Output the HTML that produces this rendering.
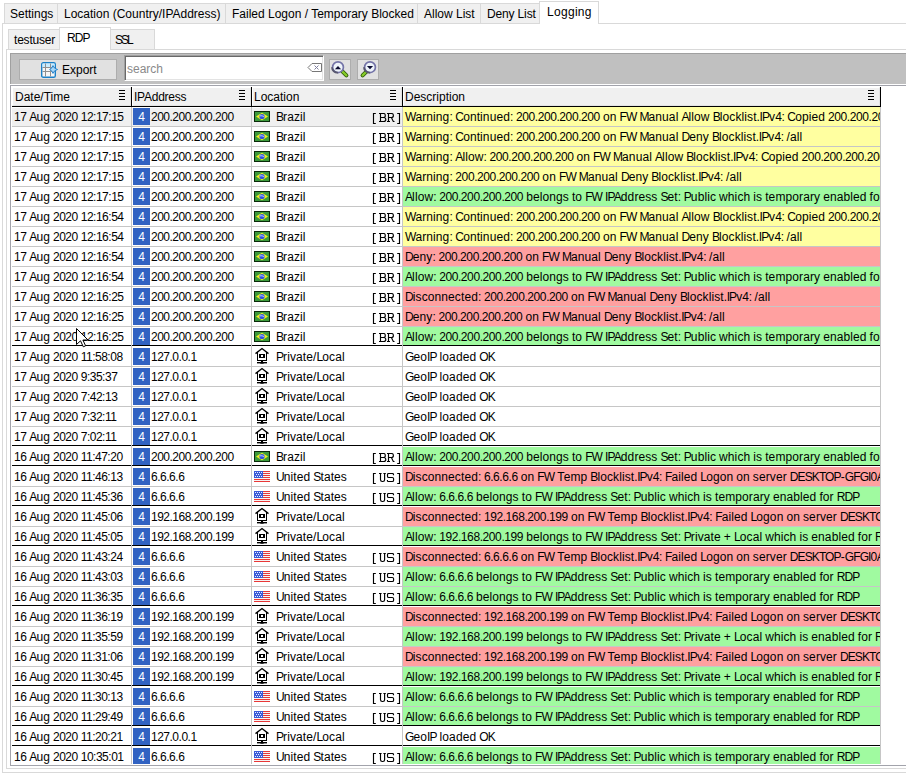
<!DOCTYPE html><html><head><meta charset="utf-8"><style>
*{margin:0;padding:0;box-sizing:content-box}
html,body{width:906px;height:776px;overflow:hidden;background:#fff}
body{position:relative;font-family:"Liberation Sans", sans-serif;font-size:12px;color:#000}
.tab{position:absolute;background:#f0f0f0;border:1px solid #d9d9d9;border-bottom:none}
.tab span{position:absolute;top:3px;white-space:nowrap;line-height:14px}
.tab.sel{background:#fff;z-index:3}
.tab.sel span{top:3px}
.pnl{position:absolute;border:1px solid #d9d9d9;background:#fff}
#tb{position:absolute;left:10px;top:53px;width:900px;height:30px;background:#c0c0c0;border-top:1px solid #a0a0a0;border-left:1px solid #a0a0a0}
.btn{position:absolute;background:#e1e1e1;border:1px solid #adadad;white-space:nowrap;line-height:14px}
#srch{position:absolute;left:124px;top:55px;width:198px;height:24px;background:#fff;border:1px solid;border-color:#a0a0a0 #fff #fff #a0a0a0;box-shadow:inset 1px 1px 0 #696969, inset -1px -1px 0 #e3e3e3}
#srch span{position:absolute;left:2px;top:6px;color:#8a8a8a;line-height:14px}
#tbl{position:absolute;left:10px;top:85px;width:920px;height:679px;border:1px solid #a2a3ab;background:#fff}
.hc{position:absolute;top:87px;height:17px;background:#f0f0f0;border:1px solid;border-color:#fff #e3e3e3 #e3e3e3 #fff}
.ht{position:absolute;top:90px;line-height:14px;white-space:nowrap}
.hsep{position:absolute;top:87px;width:1px;height:20px;background:#000}
#hline{position:absolute;left:12px;top:106px;width:868px;height:1px;background:#000}
.hamw{position:absolute;top:90px;width:6px;height:10px}
.ham s{display:block;width:6px;height:1px;background:#000;margin-bottom:2px;text-decoration:none}
#rows{position:absolute;left:0;top:107px;width:906px;height:657px;overflow:hidden}
.r{position:absolute;left:0;width:906px;height:20px}
.c{position:absolute;top:0;height:19px;overflow:hidden;white-space:nowrap;line-height:19px}
.c1{left:12px;width:119px}
.dd{position:absolute;left:2px;top:1px}
.c2{left:132px;width:119px}
.c3{left:252px;width:150px}
.c4{left:403px;width:477px}
.gl{position:absolute;left:12px;top:19px;width:868px;height:1px;background:#c6c6c6}
.vl{position:absolute;top:0;width:1px;height:657px;background:#c6c6c6}
.v4{position:absolute;left:1px;top:1px;width:17px;height:17px;background:#3162c2;color:#fff;text-align:center;line-height:19px}
.ip{position:absolute;left:19px;top:1px;letter-spacing:-0.1px}
.fl{position:absolute;left:2px;top:4px}
.hs{position:absolute;left:2px;top:0px}
.lt{position:absolute;left:24px;top:1px;letter-spacing:-0.1px}
.ccs{position:absolute;left:120px;top:6px}
.dt{position:absolute;left:2px;top:1px;letter-spacing:-0.1px}
.sep{position:absolute;left:12px;top:18px;width:868px;height:2px;background:linear-gradient(#000 50%,#fff 50%)}
i{font-style:normal;letter-spacing:-0.4px}
b{font-weight:normal;letter-spacing:-0.45px}
em{font-style:normal;letter-spacing:-0.9px}
.dd i,.ip i{letter-spacing:-0.52px}
.dd,.ip,.lt,.dt{letter-spacing:0.1px;word-spacing:-0.4px}
</style></head><body><div class="tab" style="left:4px;top:3px;width:52px;height:19px"><span style="left:5px;letter-spacing:0px">Settings</span></div>
<div class="tab" style="left:57px;top:3px;width:167px;height:19px"><span style="left:6px;letter-spacing:0px">Location (Country/IPAddress)</span></div>
<div class="tab" style="left:225px;top:3px;width:191px;height:19px"><span style="left:6px;letter-spacing:0px">Failed Logon / Temporary Blocked</span></div>
<div class="tab" style="left:417px;top:3px;width:62px;height:19px"><span style="left:6px;letter-spacing:0px">Allow List</span></div>
<div class="tab" style="left:480px;top:3px;width:58px;height:19px"><span style="left:6px;letter-spacing:-0.15px">Deny List</span></div>
<div class="pnl" style="left:2px;top:23px;width:920px;height:748px"></div>
<div class="tab sel" style="left:539px;top:1px;width:58px;height:22px"><span style="left:7px;letter-spacing:0.3px">Logging</span></div>
<div class="tab" style="left:8px;top:29px;width:50px;height:19px"><span style="left:5px;letter-spacing:-0.2px">testuser</span></div>
<div class="tab" style="left:110px;top:29px;width:43px;height:19px"><span style="left:4px;letter-spacing:-2px">SSL</span></div>
<div class="pnl" style="left:6px;top:49px;width:920px;height:718px"></div>
<div class="tab sel" style="left:59px;top:27px;width:50px;height:22px"><span style="left:7px;letter-spacing:-0.9px">RDP</span></div>
<div id="tb"></div>
<div class="btn" style="left:19px;top:59px;width:96px;height:19px"><svg style="position:absolute;left:21px;top:2px" width="18" height="17" viewBox="0 0 18 17"><rect x="0.7" y="0.7" width="13.6" height="14.6" rx="1.6" fill="#f6f6f6" stroke="#1a80c8" stroke-width="1.4"/><rect x="1.5" y="1.5" width="12" height="3.5" fill="#c8ecff"/><path d="M4.5 1.5V14.5M9.5 1.5V14.5M1.5 5.5H13.5M1.5 9.5H13.5" stroke="#909090" stroke-width="1"/><path d="M8.6 7.5 Q11 6.8 12 3.6 Q13 6.8 16.6 7.5 Q13 8.2 12 11.4 Q11 8.2 8.6 7.5Z" fill="#a8d8f8" stroke="#2a86d0" stroke-width="1"/></svg><span style="position:absolute;left:42px;top:3px">Export</span></div>
<div id="srch"><span>search</span><svg style="position:absolute;left:182px;top:7px" width="16" height="11" viewBox="0 0 16 11"><path d="M1 4.5 L5 0.5 H14.5 V8.5 H5 Z" fill="#fff" stroke="#777" stroke-width="1"/><path d="M7.5 2.5 L11.5 6.5 M11.5 2.5 L7.5 6.5" stroke="#8080a0" stroke-width="1"/></svg></div>
<div class="btn" style="left:329px;top:59px;width:20px;height:19px"><svg style="position:absolute;left:0;top:0" width="22" height="21" viewBox="0 0 22 21"><path d="M12.6 11.6 L16.4 15.4" stroke="#2e5a0a" stroke-width="4" stroke-linecap="round"/><path d="M12.6 11.6 L16.4 15.4" stroke="#86cc28" stroke-width="2.2" stroke-linecap="round"/><circle cx="8" cy="7.2" r="5.4" fill="#eef4fa" stroke="#7474a8" stroke-width="1.7"/><path d="M8 12.6 A5.4 5.4 0 0 1 2 7.2" stroke="#585870" stroke-width="1.8" fill="none"/><path d="M4.9 9.2 L8 5.9 L11.1 9.2 Z" fill="#0a0a30"/></svg></div>
<div class="btn" style="left:357px;top:59px;width:20px;height:19px"><svg style="position:absolute;left:0;top:0" width="22" height="21" viewBox="0 0 22 21"><path d="M8.4 11.6 L4.6 15.4" stroke="#2e5a0a" stroke-width="4" stroke-linecap="round"/><path d="M8.4 11.6 L4.6 15.4" stroke="#86cc28" stroke-width="2.2" stroke-linecap="round"/><circle cx="12" cy="7.2" r="5.4" fill="#eef4fa" stroke="#7474a8" stroke-width="1.7"/><path d="M12 12.6 A5.4 5.4 0 0 1 6 7.2" stroke="#585870" stroke-width="1.8" fill="none"/><path d="M8.9 6.1 L15.1 6.1 L12 9.3 Z" fill="#0a0a30"/></svg></div>
<div id="tbl"></div>
<div class="hc" style="left:12px;width:117px"></div>
<div class="ht" style="left:15px">Date/Time</div>
<div class="hsep" style="left:131px"></div>
<div class="hamw" style="left:119px"><span class="ham"><s></s><s></s><s></s><s></s></span></div>
<div class="hc" style="left:132px;width:117px"></div>
<div class="ht" style="left:134px;letter-spacing:-0.25px">IPAddress</div>
<div class="hsep" style="left:251px"></div>
<div class="hamw" style="left:239px"><span class="ham"><s></s><s></s><s></s><s></s></span></div>
<div class="hc" style="left:252px;width:148px"></div>
<div class="ht" style="left:254px">Location</div>
<div class="hsep" style="left:402px"></div>
<div class="hamw" style="left:390px"><span class="ham"><s></s><s></s><s></s><s></s></span></div>
<div class="hc" style="left:403px;width:475px"></div>
<div class="ht" style="left:405px">Description</div>
<div class="hsep" style="left:880px"></div>
<div class="hamw" style="left:868px"><span class="ham"><s></s><s></s><s></s><s></s></span></div>
<div id="hline"></div>
<div id="rows"><div class="r" style="top:0px"><div class="c c1" style="background:#f0f0f0;border-top:1px solid #fff;height:18px"><span class="dd" style="top:0"><i>17</i> <em>A</em>ug <i>2020</i> <i>12</i><b>:</b><i>17</i><b>:</b><i>15</i></span></div><div class="c c2" style="background:#f0f0f0;border-top:1px solid #fff;height:18px"><span class="v4" style="top:0">4</span><span class="ip" style="top:0"><i>200</i><b>.</b><i>200</i><b>.</b><i>200</i><b>.</b><i>200</i></span></div><div class="c c3" style="background:#f0f0f0;border-top:1px solid #fff;height:18px"><div style="position:absolute;left:0;top:-1px;width:150px;height:19px"><svg class="fl" width="16" height="11" viewBox="0 0 16 11"><rect x="0.5" y="0.5" width="15" height="10" fill="#3c9a3c" stroke="#0a2a0a"/><path d="M8 1.8 L14 5.5 L8 9.2 L2 5.5Z" fill="#f0f020"/><circle cx="8" cy="5.5" r="2.6" fill="#3050e0"/><path d="M5.8 4.9 Q8 4.3 10.2 5.6" stroke="#c0d8ff" stroke-width="0.9" fill="none"/></svg><span class="lt"><em>B</em>razil</span><svg class="ccs" width="30" height="12" viewBox="0 0 30 12"><path fill="none" stroke="#000" stroke-width="1.15" d="M3.8 0.5 H1.5 V10.5 H3.8 M7 0.5 H11.6 Q13.3 0.5 13.3 2.4 Q13.3 4.5 11.4 4.5 H8.5 M11.4 4.5 Q13.8 4.5 13.8 6.5 Q13.8 8.5 11.6 8.5 H7 M8.5 0.5 V8.5 M15 0.5 H19.5 Q21.4 0.5 21.4 2.5 Q21.4 4.5 19.5 4.5 H16.5 M16.5 0.5 V8.5 M15 8.5 H18 M19.4 4.6 L21.3 8.5 H22.5 M25.2 0.5 H27.5 V10.5 H25.2"/></svg></div></div><div class="c c4" style="background:#ffffa0"><span class="dt"><em>W</em>arning<b>:</b> <em>C</em>ontinued<b>:</b> <i>200</i><b>.</b><i>200</i><b>.</b><i>200</i><b>.</b><i>200</i> on <em>FW</em> <em>M</em>anual <em>A</em>llow <em>B</em>locklist<b>.</b><em>IP</em>v<i>4</i><b>:</b> <em>C</em>opied <i>200</i><b>.</b><i>200</i><b>.</b><i>200</i><b>.</b><i>200</i> to <em>FW</em> <em>M</em>anual <em>D</em>eny <em>B</em>locklist<b>.</b><em>IP</em>v<i>4</i></span></div><div class="gl"></div></div><div class="r" style="top:20px"><div class="c c1" style="background:#fff"><span class="dd"><i>17</i> <em>A</em>ug <i>2020</i> <i>12</i><b>:</b><i>17</i><b>:</b><i>15</i></span></div><div class="c c2" style="background:#fff"><span class="v4">4</span><span class="ip"><i>200</i><b>.</b><i>200</i><b>.</b><i>200</i><b>.</b><i>200</i></span></div><div class="c c3" style="background:#fff"><svg class="fl" width="16" height="11" viewBox="0 0 16 11"><rect x="0.5" y="0.5" width="15" height="10" fill="#3c9a3c" stroke="#0a2a0a"/><path d="M8 1.8 L14 5.5 L8 9.2 L2 5.5Z" fill="#f0f020"/><circle cx="8" cy="5.5" r="2.6" fill="#3050e0"/><path d="M5.8 4.9 Q8 4.3 10.2 5.6" stroke="#c0d8ff" stroke-width="0.9" fill="none"/></svg><span class="lt"><em>B</em>razil</span><svg class="ccs" width="30" height="12" viewBox="0 0 30 12"><path fill="none" stroke="#000" stroke-width="1.15" d="M3.8 0.5 H1.5 V10.5 H3.8 M7 0.5 H11.6 Q13.3 0.5 13.3 2.4 Q13.3 4.5 11.4 4.5 H8.5 M11.4 4.5 Q13.8 4.5 13.8 6.5 Q13.8 8.5 11.6 8.5 H7 M8.5 0.5 V8.5 M15 0.5 H19.5 Q21.4 0.5 21.4 2.5 Q21.4 4.5 19.5 4.5 H16.5 M16.5 0.5 V8.5 M15 8.5 H18 M19.4 4.6 L21.3 8.5 H22.5 M25.2 0.5 H27.5 V10.5 H25.2"/></svg></div><div class="c c4" style="background:#ffffa0"><span class="dt"><em>W</em>arning<b>:</b> <em>C</em>ontinued<b>:</b> <i>200</i><b>.</b><i>200</i><b>.</b><i>200</i><b>.</b><i>200</i> on <em>FW</em> <em>M</em>anual <em>D</em>eny <em>B</em>locklist<b>.</b><em>IP</em>v<i>4</i><b>:</b> /all</span></div><div class="gl"></div></div><div class="r" style="top:40px"><div class="c c1" style="background:#fff"><span class="dd"><i>17</i> <em>A</em>ug <i>2020</i> <i>12</i><b>:</b><i>17</i><b>:</b><i>15</i></span></div><div class="c c2" style="background:#fff"><span class="v4">4</span><span class="ip"><i>200</i><b>.</b><i>200</i><b>.</b><i>200</i><b>.</b><i>200</i></span></div><div class="c c3" style="background:#fff"><svg class="fl" width="16" height="11" viewBox="0 0 16 11"><rect x="0.5" y="0.5" width="15" height="10" fill="#3c9a3c" stroke="#0a2a0a"/><path d="M8 1.8 L14 5.5 L8 9.2 L2 5.5Z" fill="#f0f020"/><circle cx="8" cy="5.5" r="2.6" fill="#3050e0"/><path d="M5.8 4.9 Q8 4.3 10.2 5.6" stroke="#c0d8ff" stroke-width="0.9" fill="none"/></svg><span class="lt"><em>B</em>razil</span><svg class="ccs" width="30" height="12" viewBox="0 0 30 12"><path fill="none" stroke="#000" stroke-width="1.15" d="M3.8 0.5 H1.5 V10.5 H3.8 M7 0.5 H11.6 Q13.3 0.5 13.3 2.4 Q13.3 4.5 11.4 4.5 H8.5 M11.4 4.5 Q13.8 4.5 13.8 6.5 Q13.8 8.5 11.6 8.5 H7 M8.5 0.5 V8.5 M15 0.5 H19.5 Q21.4 0.5 21.4 2.5 Q21.4 4.5 19.5 4.5 H16.5 M16.5 0.5 V8.5 M15 8.5 H18 M19.4 4.6 L21.3 8.5 H22.5 M25.2 0.5 H27.5 V10.5 H25.2"/></svg></div><div class="c c4" style="background:#ffffa0"><span class="dt"><em>W</em>arning<b>:</b> <em>A</em>llow<b>:</b> <i>200</i><b>.</b><i>200</i><b>.</b><i>200</i><b>.</b><i>200</i> on <em>FW</em> <em>M</em>anual <em>A</em>llow <em>B</em>locklist<b>.</b><em>IP</em>v<i>4</i><b>:</b> <em>C</em>opied <i>200</i><b>.</b><i>200</i><b>.</b><i>200</i><b>.</b><i>200</i> to <em>FW</em></span></div><div class="gl"></div></div><div class="r" style="top:60px"><div class="c c1" style="background:#fff"><span class="dd"><i>17</i> <em>A</em>ug <i>2020</i> <i>12</i><b>:</b><i>17</i><b>:</b><i>15</i></span></div><div class="c c2" style="background:#fff"><span class="v4">4</span><span class="ip"><i>200</i><b>.</b><i>200</i><b>.</b><i>200</i><b>.</b><i>200</i></span></div><div class="c c3" style="background:#fff"><svg class="fl" width="16" height="11" viewBox="0 0 16 11"><rect x="0.5" y="0.5" width="15" height="10" fill="#3c9a3c" stroke="#0a2a0a"/><path d="M8 1.8 L14 5.5 L8 9.2 L2 5.5Z" fill="#f0f020"/><circle cx="8" cy="5.5" r="2.6" fill="#3050e0"/><path d="M5.8 4.9 Q8 4.3 10.2 5.6" stroke="#c0d8ff" stroke-width="0.9" fill="none"/></svg><span class="lt"><em>B</em>razil</span><svg class="ccs" width="30" height="12" viewBox="0 0 30 12"><path fill="none" stroke="#000" stroke-width="1.15" d="M3.8 0.5 H1.5 V10.5 H3.8 M7 0.5 H11.6 Q13.3 0.5 13.3 2.4 Q13.3 4.5 11.4 4.5 H8.5 M11.4 4.5 Q13.8 4.5 13.8 6.5 Q13.8 8.5 11.6 8.5 H7 M8.5 0.5 V8.5 M15 0.5 H19.5 Q21.4 0.5 21.4 2.5 Q21.4 4.5 19.5 4.5 H16.5 M16.5 0.5 V8.5 M15 8.5 H18 M19.4 4.6 L21.3 8.5 H22.5 M25.2 0.5 H27.5 V10.5 H25.2"/></svg></div><div class="c c4" style="background:#ffffa0"><span class="dt"><em>W</em>arning<b>:</b> <i>200</i><b>.</b><i>200</i><b>.</b><i>200</i><b>.</b><i>200</i> on <em>FW</em> <em>M</em>anual <em>D</em>eny <em>B</em>locklist<b>.</b><em>IP</em>v<i>4</i><b>:</b> /all</span></div><div class="gl"></div></div><div class="r" style="top:80px"><div class="c c1" style="background:#fff"><span class="dd"><i>17</i> <em>A</em>ug <i>2020</i> <i>12</i><b>:</b><i>17</i><b>:</b><i>15</i></span></div><div class="c c2" style="background:#fff"><span class="v4">4</span><span class="ip"><i>200</i><b>.</b><i>200</i><b>.</b><i>200</i><b>.</b><i>200</i></span></div><div class="c c3" style="background:#fff"><svg class="fl" width="16" height="11" viewBox="0 0 16 11"><rect x="0.5" y="0.5" width="15" height="10" fill="#3c9a3c" stroke="#0a2a0a"/><path d="M8 1.8 L14 5.5 L8 9.2 L2 5.5Z" fill="#f0f020"/><circle cx="8" cy="5.5" r="2.6" fill="#3050e0"/><path d="M5.8 4.9 Q8 4.3 10.2 5.6" stroke="#c0d8ff" stroke-width="0.9" fill="none"/></svg><span class="lt"><em>B</em>razil</span><svg class="ccs" width="30" height="12" viewBox="0 0 30 12"><path fill="none" stroke="#000" stroke-width="1.15" d="M3.8 0.5 H1.5 V10.5 H3.8 M7 0.5 H11.6 Q13.3 0.5 13.3 2.4 Q13.3 4.5 11.4 4.5 H8.5 M11.4 4.5 Q13.8 4.5 13.8 6.5 Q13.8 8.5 11.6 8.5 H7 M8.5 0.5 V8.5 M15 0.5 H19.5 Q21.4 0.5 21.4 2.5 Q21.4 4.5 19.5 4.5 H16.5 M16.5 0.5 V8.5 M15 8.5 H18 M19.4 4.6 L21.3 8.5 H22.5 M25.2 0.5 H27.5 V10.5 H25.2"/></svg></div><div class="c c4" style="background:#a0faa0"><span class="dt"><em>A</em>llow<b>:</b> <i>200</i><b>.</b><i>200</i><b>.</b><i>200</i><b>.</b><i>200</i> belongs to <em>FW</em> <em>IPA</em>ddress <em>S</em>et<b>:</b> <em>P</em>ublic which is temporary enabled for <em>RDP</em></span></div><div class="gl"></div></div><div class="r" style="top:100px"><div class="c c1" style="background:#fff"><span class="dd"><i>17</i> <em>A</em>ug <i>2020</i> <i>12</i><b>:</b><i>16</i><b>:</b><i>54</i></span></div><div class="c c2" style="background:#fff"><span class="v4">4</span><span class="ip"><i>200</i><b>.</b><i>200</i><b>.</b><i>200</i><b>.</b><i>200</i></span></div><div class="c c3" style="background:#fff"><svg class="fl" width="16" height="11" viewBox="0 0 16 11"><rect x="0.5" y="0.5" width="15" height="10" fill="#3c9a3c" stroke="#0a2a0a"/><path d="M8 1.8 L14 5.5 L8 9.2 L2 5.5Z" fill="#f0f020"/><circle cx="8" cy="5.5" r="2.6" fill="#3050e0"/><path d="M5.8 4.9 Q8 4.3 10.2 5.6" stroke="#c0d8ff" stroke-width="0.9" fill="none"/></svg><span class="lt"><em>B</em>razil</span><svg class="ccs" width="30" height="12" viewBox="0 0 30 12"><path fill="none" stroke="#000" stroke-width="1.15" d="M3.8 0.5 H1.5 V10.5 H3.8 M7 0.5 H11.6 Q13.3 0.5 13.3 2.4 Q13.3 4.5 11.4 4.5 H8.5 M11.4 4.5 Q13.8 4.5 13.8 6.5 Q13.8 8.5 11.6 8.5 H7 M8.5 0.5 V8.5 M15 0.5 H19.5 Q21.4 0.5 21.4 2.5 Q21.4 4.5 19.5 4.5 H16.5 M16.5 0.5 V8.5 M15 8.5 H18 M19.4 4.6 L21.3 8.5 H22.5 M25.2 0.5 H27.5 V10.5 H25.2"/></svg></div><div class="c c4" style="background:#ffffa0"><span class="dt"><em>W</em>arning<b>:</b> <em>C</em>ontinued<b>:</b> <i>200</i><b>.</b><i>200</i><b>.</b><i>200</i><b>.</b><i>200</i> on <em>FW</em> <em>M</em>anual <em>A</em>llow <em>B</em>locklist<b>.</b><em>IP</em>v<i>4</i><b>:</b> <em>C</em>opied <i>200</i><b>.</b><i>200</i><b>.</b><i>200</i><b>.</b><i>200</i> to <em>FW</em> <em>M</em>anual <em>D</em>eny <em>B</em>locklist<b>.</b><em>IP</em>v<i>4</i></span></div><div class="gl"></div></div><div class="r" style="top:120px"><div class="c c1" style="background:#fff"><span class="dd"><i>17</i> <em>A</em>ug <i>2020</i> <i>12</i><b>:</b><i>16</i><b>:</b><i>54</i></span></div><div class="c c2" style="background:#fff"><span class="v4">4</span><span class="ip"><i>200</i><b>.</b><i>200</i><b>.</b><i>200</i><b>.</b><i>200</i></span></div><div class="c c3" style="background:#fff"><svg class="fl" width="16" height="11" viewBox="0 0 16 11"><rect x="0.5" y="0.5" width="15" height="10" fill="#3c9a3c" stroke="#0a2a0a"/><path d="M8 1.8 L14 5.5 L8 9.2 L2 5.5Z" fill="#f0f020"/><circle cx="8" cy="5.5" r="2.6" fill="#3050e0"/><path d="M5.8 4.9 Q8 4.3 10.2 5.6" stroke="#c0d8ff" stroke-width="0.9" fill="none"/></svg><span class="lt"><em>B</em>razil</span><svg class="ccs" width="30" height="12" viewBox="0 0 30 12"><path fill="none" stroke="#000" stroke-width="1.15" d="M3.8 0.5 H1.5 V10.5 H3.8 M7 0.5 H11.6 Q13.3 0.5 13.3 2.4 Q13.3 4.5 11.4 4.5 H8.5 M11.4 4.5 Q13.8 4.5 13.8 6.5 Q13.8 8.5 11.6 8.5 H7 M8.5 0.5 V8.5 M15 0.5 H19.5 Q21.4 0.5 21.4 2.5 Q21.4 4.5 19.5 4.5 H16.5 M16.5 0.5 V8.5 M15 8.5 H18 M19.4 4.6 L21.3 8.5 H22.5 M25.2 0.5 H27.5 V10.5 H25.2"/></svg></div><div class="c c4" style="background:#ffffa0"><span class="dt"><em>W</em>arning<b>:</b> <em>C</em>ontinued<b>:</b> <i>200</i><b>.</b><i>200</i><b>.</b><i>200</i><b>.</b><i>200</i> on <em>FW</em> <em>M</em>anual <em>D</em>eny <em>B</em>locklist<b>.</b><em>IP</em>v<i>4</i><b>:</b> /all</span></div><div class="gl"></div></div><div class="r" style="top:140px"><div class="c c1" style="background:#fff"><span class="dd"><i>17</i> <em>A</em>ug <i>2020</i> <i>12</i><b>:</b><i>16</i><b>:</b><i>54</i></span></div><div class="c c2" style="background:#fff"><span class="v4">4</span><span class="ip"><i>200</i><b>.</b><i>200</i><b>.</b><i>200</i><b>.</b><i>200</i></span></div><div class="c c3" style="background:#fff"><svg class="fl" width="16" height="11" viewBox="0 0 16 11"><rect x="0.5" y="0.5" width="15" height="10" fill="#3c9a3c" stroke="#0a2a0a"/><path d="M8 1.8 L14 5.5 L8 9.2 L2 5.5Z" fill="#f0f020"/><circle cx="8" cy="5.5" r="2.6" fill="#3050e0"/><path d="M5.8 4.9 Q8 4.3 10.2 5.6" stroke="#c0d8ff" stroke-width="0.9" fill="none"/></svg><span class="lt"><em>B</em>razil</span><svg class="ccs" width="30" height="12" viewBox="0 0 30 12"><path fill="none" stroke="#000" stroke-width="1.15" d="M3.8 0.5 H1.5 V10.5 H3.8 M7 0.5 H11.6 Q13.3 0.5 13.3 2.4 Q13.3 4.5 11.4 4.5 H8.5 M11.4 4.5 Q13.8 4.5 13.8 6.5 Q13.8 8.5 11.6 8.5 H7 M8.5 0.5 V8.5 M15 0.5 H19.5 Q21.4 0.5 21.4 2.5 Q21.4 4.5 19.5 4.5 H16.5 M16.5 0.5 V8.5 M15 8.5 H18 M19.4 4.6 L21.3 8.5 H22.5 M25.2 0.5 H27.5 V10.5 H25.2"/></svg></div><div class="c c4" style="background:#ffa0a0"><span class="dt"><em>D</em>eny<b>:</b> <i>200</i><b>.</b><i>200</i><b>.</b><i>200</i><b>.</b><i>200</i> on <em>FW</em> <em>M</em>anual <em>D</em>eny <em>B</em>locklist<b>.</b><em>IP</em>v<i>4</i><b>:</b> /all</span></div><div class="gl"></div></div><div class="r" style="top:160px"><div class="c c1" style="background:#fff"><span class="dd"><i>17</i> <em>A</em>ug <i>2020</i> <i>12</i><b>:</b><i>16</i><b>:</b><i>54</i></span></div><div class="c c2" style="background:#fff"><span class="v4">4</span><span class="ip"><i>200</i><b>.</b><i>200</i><b>.</b><i>200</i><b>.</b><i>200</i></span></div><div class="c c3" style="background:#fff"><svg class="fl" width="16" height="11" viewBox="0 0 16 11"><rect x="0.5" y="0.5" width="15" height="10" fill="#3c9a3c" stroke="#0a2a0a"/><path d="M8 1.8 L14 5.5 L8 9.2 L2 5.5Z" fill="#f0f020"/><circle cx="8" cy="5.5" r="2.6" fill="#3050e0"/><path d="M5.8 4.9 Q8 4.3 10.2 5.6" stroke="#c0d8ff" stroke-width="0.9" fill="none"/></svg><span class="lt"><em>B</em>razil</span><svg class="ccs" width="30" height="12" viewBox="0 0 30 12"><path fill="none" stroke="#000" stroke-width="1.15" d="M3.8 0.5 H1.5 V10.5 H3.8 M7 0.5 H11.6 Q13.3 0.5 13.3 2.4 Q13.3 4.5 11.4 4.5 H8.5 M11.4 4.5 Q13.8 4.5 13.8 6.5 Q13.8 8.5 11.6 8.5 H7 M8.5 0.5 V8.5 M15 0.5 H19.5 Q21.4 0.5 21.4 2.5 Q21.4 4.5 19.5 4.5 H16.5 M16.5 0.5 V8.5 M15 8.5 H18 M19.4 4.6 L21.3 8.5 H22.5 M25.2 0.5 H27.5 V10.5 H25.2"/></svg></div><div class="c c4" style="background:#a0faa0"><span class="dt"><em>A</em>llow<b>:</b> <i>200</i><b>.</b><i>200</i><b>.</b><i>200</i><b>.</b><i>200</i> belongs to <em>FW</em> <em>IPA</em>ddress <em>S</em>et<b>:</b> <em>P</em>ublic which is temporary enabled for <em>RDP</em></span></div><div class="gl"></div></div><div class="r" style="top:180px"><div class="c c1" style="background:#fff"><span class="dd"><i>17</i> <em>A</em>ug <i>2020</i> <i>12</i><b>:</b><i>16</i><b>:</b><i>25</i></span></div><div class="c c2" style="background:#fff"><span class="v4">4</span><span class="ip"><i>200</i><b>.</b><i>200</i><b>.</b><i>200</i><b>.</b><i>200</i></span></div><div class="c c3" style="background:#fff"><svg class="fl" width="16" height="11" viewBox="0 0 16 11"><rect x="0.5" y="0.5" width="15" height="10" fill="#3c9a3c" stroke="#0a2a0a"/><path d="M8 1.8 L14 5.5 L8 9.2 L2 5.5Z" fill="#f0f020"/><circle cx="8" cy="5.5" r="2.6" fill="#3050e0"/><path d="M5.8 4.9 Q8 4.3 10.2 5.6" stroke="#c0d8ff" stroke-width="0.9" fill="none"/></svg><span class="lt"><em>B</em>razil</span><svg class="ccs" width="30" height="12" viewBox="0 0 30 12"><path fill="none" stroke="#000" stroke-width="1.15" d="M3.8 0.5 H1.5 V10.5 H3.8 M7 0.5 H11.6 Q13.3 0.5 13.3 2.4 Q13.3 4.5 11.4 4.5 H8.5 M11.4 4.5 Q13.8 4.5 13.8 6.5 Q13.8 8.5 11.6 8.5 H7 M8.5 0.5 V8.5 M15 0.5 H19.5 Q21.4 0.5 21.4 2.5 Q21.4 4.5 19.5 4.5 H16.5 M16.5 0.5 V8.5 M15 8.5 H18 M19.4 4.6 L21.3 8.5 H22.5 M25.2 0.5 H27.5 V10.5 H25.2"/></svg></div><div class="c c4" style="background:#ffa0a0"><span class="dt"><em>D</em>isconnected<b>:</b> <i>200</i><b>.</b><i>200</i><b>.</b><i>200</i><b>.</b><i>200</i> on <em>FW</em> <em>M</em>anual <em>D</em>eny <em>B</em>locklist<b>.</b><em>IP</em>v<i>4</i><b>:</b> /all</span></div><div class="gl"></div></div><div class="r" style="top:200px"><div class="c c1" style="background:#fff"><span class="dd"><i>17</i> <em>A</em>ug <i>2020</i> <i>12</i><b>:</b><i>16</i><b>:</b><i>25</i></span></div><div class="c c2" style="background:#fff"><span class="v4">4</span><span class="ip"><i>200</i><b>.</b><i>200</i><b>.</b><i>200</i><b>.</b><i>200</i></span></div><div class="c c3" style="background:#fff"><svg class="fl" width="16" height="11" viewBox="0 0 16 11"><rect x="0.5" y="0.5" width="15" height="10" fill="#3c9a3c" stroke="#0a2a0a"/><path d="M8 1.8 L14 5.5 L8 9.2 L2 5.5Z" fill="#f0f020"/><circle cx="8" cy="5.5" r="2.6" fill="#3050e0"/><path d="M5.8 4.9 Q8 4.3 10.2 5.6" stroke="#c0d8ff" stroke-width="0.9" fill="none"/></svg><span class="lt"><em>B</em>razil</span><svg class="ccs" width="30" height="12" viewBox="0 0 30 12"><path fill="none" stroke="#000" stroke-width="1.15" d="M3.8 0.5 H1.5 V10.5 H3.8 M7 0.5 H11.6 Q13.3 0.5 13.3 2.4 Q13.3 4.5 11.4 4.5 H8.5 M11.4 4.5 Q13.8 4.5 13.8 6.5 Q13.8 8.5 11.6 8.5 H7 M8.5 0.5 V8.5 M15 0.5 H19.5 Q21.4 0.5 21.4 2.5 Q21.4 4.5 19.5 4.5 H16.5 M16.5 0.5 V8.5 M15 8.5 H18 M19.4 4.6 L21.3 8.5 H22.5 M25.2 0.5 H27.5 V10.5 H25.2"/></svg></div><div class="c c4" style="background:#ffa0a0"><span class="dt"><em>D</em>eny<b>:</b> <i>200</i><b>.</b><i>200</i><b>.</b><i>200</i><b>.</b><i>200</i> on <em>FW</em> <em>M</em>anual <em>D</em>eny <em>B</em>locklist<b>.</b><em>IP</em>v<i>4</i><b>:</b> /all</span></div><div class="gl"></div></div><div class="r" style="top:220px"><div class="c c1" style="background:#fff"><span class="dd"><i>17</i> <em>A</em>ug <i>2020</i> <i>12</i><b>:</b><i>16</i><b>:</b><i>25</i></span></div><div class="c c2" style="background:#fff"><span class="v4">4</span><span class="ip"><i>200</i><b>.</b><i>200</i><b>.</b><i>200</i><b>.</b><i>200</i></span></div><div class="c c3" style="background:#fff"><svg class="fl" width="16" height="11" viewBox="0 0 16 11"><rect x="0.5" y="0.5" width="15" height="10" fill="#3c9a3c" stroke="#0a2a0a"/><path d="M8 1.8 L14 5.5 L8 9.2 L2 5.5Z" fill="#f0f020"/><circle cx="8" cy="5.5" r="2.6" fill="#3050e0"/><path d="M5.8 4.9 Q8 4.3 10.2 5.6" stroke="#c0d8ff" stroke-width="0.9" fill="none"/></svg><span class="lt"><em>B</em>razil</span><svg class="ccs" width="30" height="12" viewBox="0 0 30 12"><path fill="none" stroke="#000" stroke-width="1.15" d="M3.8 0.5 H1.5 V10.5 H3.8 M7 0.5 H11.6 Q13.3 0.5 13.3 2.4 Q13.3 4.5 11.4 4.5 H8.5 M11.4 4.5 Q13.8 4.5 13.8 6.5 Q13.8 8.5 11.6 8.5 H7 M8.5 0.5 V8.5 M15 0.5 H19.5 Q21.4 0.5 21.4 2.5 Q21.4 4.5 19.5 4.5 H16.5 M16.5 0.5 V8.5 M15 8.5 H18 M19.4 4.6 L21.3 8.5 H22.5 M25.2 0.5 H27.5 V10.5 H25.2"/></svg></div><div class="c c4" style="background:#a0faa0"><span class="dt"><em>A</em>llow<b>:</b> <i>200</i><b>.</b><i>200</i><b>.</b><i>200</i><b>.</b><i>200</i> belongs to <em>FW</em> <em>IPA</em>ddress <em>S</em>et<b>:</b> <em>P</em>ublic which is temporary enabled for <em>RDP</em></span></div><div class="sep"></div></div><div class="r" style="top:240px"><div class="c c1" style="background:#fff"><span class="dd"><i>17</i> <em>A</em>ug <i>2020</i> <i>11</i><b>:</b><i>58</i><b>:</b><i>08</i></span></div><div class="c c2" style="background:#fff"><span class="v4">4</span><span class="ip"><i>127</i><b>.</b><i>0</i><b>.</b><i>0</i><b>.</b><i>1</i></span></div><div class="c c3" style="background:#fff"><svg class="hs" width="16" height="18" viewBox="0 0 16 18"><path d="M1.5 6.6 L8 1.5 L14.5 6.6" stroke="#000" stroke-width="1.35" fill="none" stroke-linejoin="miter"/><g shape-rendering="crispEdges" fill="#000"><rect x="3" y="5" width="1" height="9"/><rect x="12" y="5" width="1" height="9"/><rect x="3" y="13" width="10" height="1"/><path fill-rule="evenodd" d="M5 7h6v4h-6z M7 8h2v2h-2z"/><rect x="7" y="14" width="2" height="1"/></g><rect x="3" y="15" width="10" height="1.4" fill="#000"/><ellipse cx="8" cy="15.7" rx="2.2" ry="1" fill="#000"/></svg><span class="lt"><em>P</em>rivate/<em>L</em>ocal</span></div><div class="c c4" style="background:#ffffff"><span class="dt"><em>G</em>eo<em>IP</em> loaded <em>OK</em></span></div><div class="gl"></div></div><div class="r" style="top:260px"><div class="c c1" style="background:#fff"><span class="dd"><i>17</i> <em>A</em>ug <i>2020</i> <i>9</i><b>:</b><i>35</i><b>:</b><i>37</i></span></div><div class="c c2" style="background:#fff"><span class="v4">4</span><span class="ip"><i>127</i><b>.</b><i>0</i><b>.</b><i>0</i><b>.</b><i>1</i></span></div><div class="c c3" style="background:#fff"><svg class="hs" width="16" height="18" viewBox="0 0 16 18"><path d="M1.5 6.6 L8 1.5 L14.5 6.6" stroke="#000" stroke-width="1.35" fill="none" stroke-linejoin="miter"/><g shape-rendering="crispEdges" fill="#000"><rect x="3" y="5" width="1" height="9"/><rect x="12" y="5" width="1" height="9"/><rect x="3" y="13" width="10" height="1"/><path fill-rule="evenodd" d="M5 7h6v4h-6z M7 8h2v2h-2z"/><rect x="7" y="14" width="2" height="1"/></g><rect x="3" y="15" width="10" height="1.4" fill="#000"/><ellipse cx="8" cy="15.7" rx="2.2" ry="1" fill="#000"/></svg><span class="lt"><em>P</em>rivate/<em>L</em>ocal</span></div><div class="c c4" style="background:#ffffff"><span class="dt"><em>G</em>eo<em>IP</em> loaded <em>OK</em></span></div><div class="gl"></div></div><div class="r" style="top:280px"><div class="c c1" style="background:#fff"><span class="dd"><i>17</i> <em>A</em>ug <i>2020</i> <i>7</i><b>:</b><i>42</i><b>:</b><i>13</i></span></div><div class="c c2" style="background:#fff"><span class="v4">4</span><span class="ip"><i>127</i><b>.</b><i>0</i><b>.</b><i>0</i><b>.</b><i>1</i></span></div><div class="c c3" style="background:#fff"><svg class="hs" width="16" height="18" viewBox="0 0 16 18"><path d="M1.5 6.6 L8 1.5 L14.5 6.6" stroke="#000" stroke-width="1.35" fill="none" stroke-linejoin="miter"/><g shape-rendering="crispEdges" fill="#000"><rect x="3" y="5" width="1" height="9"/><rect x="12" y="5" width="1" height="9"/><rect x="3" y="13" width="10" height="1"/><path fill-rule="evenodd" d="M5 7h6v4h-6z M7 8h2v2h-2z"/><rect x="7" y="14" width="2" height="1"/></g><rect x="3" y="15" width="10" height="1.4" fill="#000"/><ellipse cx="8" cy="15.7" rx="2.2" ry="1" fill="#000"/></svg><span class="lt"><em>P</em>rivate/<em>L</em>ocal</span></div><div class="c c4" style="background:#ffffff"><span class="dt"><em>G</em>eo<em>IP</em> loaded <em>OK</em></span></div><div class="gl"></div></div><div class="r" style="top:300px"><div class="c c1" style="background:#fff"><span class="dd"><i>17</i> <em>A</em>ug <i>2020</i> <i>7</i><b>:</b><i>32</i><b>:</b><i>11</i></span></div><div class="c c2" style="background:#fff"><span class="v4">4</span><span class="ip"><i>127</i><b>.</b><i>0</i><b>.</b><i>0</i><b>.</b><i>1</i></span></div><div class="c c3" style="background:#fff"><svg class="hs" width="16" height="18" viewBox="0 0 16 18"><path d="M1.5 6.6 L8 1.5 L14.5 6.6" stroke="#000" stroke-width="1.35" fill="none" stroke-linejoin="miter"/><g shape-rendering="crispEdges" fill="#000"><rect x="3" y="5" width="1" height="9"/><rect x="12" y="5" width="1" height="9"/><rect x="3" y="13" width="10" height="1"/><path fill-rule="evenodd" d="M5 7h6v4h-6z M7 8h2v2h-2z"/><rect x="7" y="14" width="2" height="1"/></g><rect x="3" y="15" width="10" height="1.4" fill="#000"/><ellipse cx="8" cy="15.7" rx="2.2" ry="1" fill="#000"/></svg><span class="lt"><em>P</em>rivate/<em>L</em>ocal</span></div><div class="c c4" style="background:#ffffff"><span class="dt"><em>G</em>eo<em>IP</em> loaded <em>OK</em></span></div><div class="gl"></div></div><div class="r" style="top:320px"><div class="c c1" style="background:#fff"><span class="dd"><i>17</i> <em>A</em>ug <i>2020</i> <i>7</i><b>:</b><i>02</i><b>:</b><i>11</i></span></div><div class="c c2" style="background:#fff"><span class="v4">4</span><span class="ip"><i>127</i><b>.</b><i>0</i><b>.</b><i>0</i><b>.</b><i>1</i></span></div><div class="c c3" style="background:#fff"><svg class="hs" width="16" height="18" viewBox="0 0 16 18"><path d="M1.5 6.6 L8 1.5 L14.5 6.6" stroke="#000" stroke-width="1.35" fill="none" stroke-linejoin="miter"/><g shape-rendering="crispEdges" fill="#000"><rect x="3" y="5" width="1" height="9"/><rect x="12" y="5" width="1" height="9"/><rect x="3" y="13" width="10" height="1"/><path fill-rule="evenodd" d="M5 7h6v4h-6z M7 8h2v2h-2z"/><rect x="7" y="14" width="2" height="1"/></g><rect x="3" y="15" width="10" height="1.4" fill="#000"/><ellipse cx="8" cy="15.7" rx="2.2" ry="1" fill="#000"/></svg><span class="lt"><em>P</em>rivate/<em>L</em>ocal</span></div><div class="c c4" style="background:#ffffff"><span class="dt"><em>G</em>eo<em>IP</em> loaded <em>OK</em></span></div><div class="sep"></div></div><div class="r" style="top:340px"><div class="c c1" style="background:#fff"><span class="dd"><i>16</i> <em>A</em>ug <i>2020</i> <i>11</i><b>:</b><i>47</i><b>:</b><i>20</i></span></div><div class="c c2" style="background:#fff"><span class="v4">4</span><span class="ip"><i>200</i><b>.</b><i>200</i><b>.</b><i>200</i><b>.</b><i>200</i></span></div><div class="c c3" style="background:#fff"><svg class="fl" width="16" height="11" viewBox="0 0 16 11"><rect x="0.5" y="0.5" width="15" height="10" fill="#3c9a3c" stroke="#0a2a0a"/><path d="M8 1.8 L14 5.5 L8 9.2 L2 5.5Z" fill="#f0f020"/><circle cx="8" cy="5.5" r="2.6" fill="#3050e0"/><path d="M5.8 4.9 Q8 4.3 10.2 5.6" stroke="#c0d8ff" stroke-width="0.9" fill="none"/></svg><span class="lt"><em>B</em>razil</span><svg class="ccs" width="30" height="12" viewBox="0 0 30 12"><path fill="none" stroke="#000" stroke-width="1.15" d="M3.8 0.5 H1.5 V10.5 H3.8 M7 0.5 H11.6 Q13.3 0.5 13.3 2.4 Q13.3 4.5 11.4 4.5 H8.5 M11.4 4.5 Q13.8 4.5 13.8 6.5 Q13.8 8.5 11.6 8.5 H7 M8.5 0.5 V8.5 M15 0.5 H19.5 Q21.4 0.5 21.4 2.5 Q21.4 4.5 19.5 4.5 H16.5 M16.5 0.5 V8.5 M15 8.5 H18 M19.4 4.6 L21.3 8.5 H22.5 M25.2 0.5 H27.5 V10.5 H25.2"/></svg></div><div class="c c4" style="background:#a0faa0"><span class="dt"><em>A</em>llow<b>:</b> <i>200</i><b>.</b><i>200</i><b>.</b><i>200</i><b>.</b><i>200</i> belongs to <em>FW</em> <em>IPA</em>ddress <em>S</em>et<b>:</b> <em>P</em>ublic which is temporary enabled for <em>RDP</em></span></div><div class="sep"></div></div><div class="r" style="top:360px"><div class="c c1" style="background:#fff"><span class="dd"><i>16</i> <em>A</em>ug <i>2020</i> <i>11</i><b>:</b><i>46</i><b>:</b><i>13</i></span></div><div class="c c2" style="background:#fff"><span class="v4">4</span><span class="ip"><i>6</i><b>.</b><i>6</i><b>.</b><i>6</i><b>.</b><i>6</i></span></div><div class="c c3" style="background:#fff"><svg class="fl" width="16" height="11" viewBox="0 0 16 11"><rect x="0" y="0" width="16" height="1" fill="#e83838"/><rect x="0" y="1" width="16" height="1" fill="#f4f4f4"/><rect x="0" y="2" width="16" height="1" fill="#e83838"/><rect x="0" y="3" width="16" height="1" fill="#f4f4f4"/><rect x="0" y="4" width="16" height="1" fill="#e83838"/><rect x="0" y="5" width="16" height="1" fill="#f4f4f4"/><rect x="0" y="6" width="16" height="1" fill="#e83838"/><rect x="0" y="7" width="16" height="1" fill="#f4f4f4"/><rect x="0" y="8" width="16" height="1" fill="#e83838"/><rect x="0" y="9" width="16" height="1" fill="#f4f4f4"/><rect x="0" y="10" width="16" height="1" fill="#e83838"/><rect x="0" y="0" width="9" height="7" fill="#3a5ad8"/><rect x="1" y="1" width="1" height="1" fill="#e8ecff"/><rect x="3" y="1" width="1" height="1" fill="#e8ecff"/><rect x="5" y="1" width="1" height="1" fill="#e8ecff"/><rect x="7" y="1" width="1" height="1" fill="#e8ecff"/><rect x="2" y="3" width="1" height="1" fill="#e8ecff"/><rect x="4" y="3" width="1" height="1" fill="#e8ecff"/><rect x="6" y="3" width="1" height="1" fill="#e8ecff"/><rect x="1" y="5" width="1" height="1" fill="#e8ecff"/><rect x="3" y="5" width="1" height="1" fill="#e8ecff"/><rect x="5" y="5" width="1" height="1" fill="#e8ecff"/><rect x="7" y="5" width="1" height="1" fill="#e8ecff"/></svg><span class="lt"><em>U</em>nited <em>S</em>tates</span><svg class="ccs" width="30" height="12" viewBox="0 0 30 12"><path fill="none" stroke="#000" stroke-width="1.15" d="M3.8 0.5 H1.5 V10.5 H3.8 M7 0.5 H9.6 M8.5 0.5 V6.8 Q8.5 8.5 10.3 8.5 H10.9 Q12.6 8.5 12.6 6.8 V0.5 M11.4 0.5 H13.8 M21.5 2.2 V1.6 Q21.5 0.5 20.4 0.5 H16.6 Q15.5 0.5 15.5 1.8 V3.2 Q15.5 4.5 16.7 4.5 H20.3 Q21.6 4.5 21.6 5.8 V7.2 Q21.6 8.5 20.3 8.5 H16.5 Q15.4 8.5 15.4 7.4 V7 M25.2 0.5 H27.5 V10.5 H25.2"/></svg></div><div class="c c4" style="background:#ffa0a0"><span class="dt"><em>D</em>isconnected<b>:</b> <i>6</i><b>.</b><i>6</i><b>.</b><i>6</i><b>.</b><i>6</i> on <em>FW</em> <em>T</em>emp <em>B</em>locklist<b>.</b><em>IP</em>v<i>4</i><b>:</b> <em>F</em>ailed <em>L</em>ogon on server <em>DESKTOP</em>-<em>GFGI</em><i>0</i><em>A</em><i>3</i></span></div><div class="gl"></div></div><div class="r" style="top:380px"><div class="c c1" style="background:#fff"><span class="dd"><i>16</i> <em>A</em>ug <i>2020</i> <i>11</i><b>:</b><i>45</i><b>:</b><i>36</i></span></div><div class="c c2" style="background:#fff"><span class="v4">4</span><span class="ip"><i>6</i><b>.</b><i>6</i><b>.</b><i>6</i><b>.</b><i>6</i></span></div><div class="c c3" style="background:#fff"><svg class="fl" width="16" height="11" viewBox="0 0 16 11"><rect x="0" y="0" width="16" height="1" fill="#e83838"/><rect x="0" y="1" width="16" height="1" fill="#f4f4f4"/><rect x="0" y="2" width="16" height="1" fill="#e83838"/><rect x="0" y="3" width="16" height="1" fill="#f4f4f4"/><rect x="0" y="4" width="16" height="1" fill="#e83838"/><rect x="0" y="5" width="16" height="1" fill="#f4f4f4"/><rect x="0" y="6" width="16" height="1" fill="#e83838"/><rect x="0" y="7" width="16" height="1" fill="#f4f4f4"/><rect x="0" y="8" width="16" height="1" fill="#e83838"/><rect x="0" y="9" width="16" height="1" fill="#f4f4f4"/><rect x="0" y="10" width="16" height="1" fill="#e83838"/><rect x="0" y="0" width="9" height="7" fill="#3a5ad8"/><rect x="1" y="1" width="1" height="1" fill="#e8ecff"/><rect x="3" y="1" width="1" height="1" fill="#e8ecff"/><rect x="5" y="1" width="1" height="1" fill="#e8ecff"/><rect x="7" y="1" width="1" height="1" fill="#e8ecff"/><rect x="2" y="3" width="1" height="1" fill="#e8ecff"/><rect x="4" y="3" width="1" height="1" fill="#e8ecff"/><rect x="6" y="3" width="1" height="1" fill="#e8ecff"/><rect x="1" y="5" width="1" height="1" fill="#e8ecff"/><rect x="3" y="5" width="1" height="1" fill="#e8ecff"/><rect x="5" y="5" width="1" height="1" fill="#e8ecff"/><rect x="7" y="5" width="1" height="1" fill="#e8ecff"/></svg><span class="lt"><em>U</em>nited <em>S</em>tates</span><svg class="ccs" width="30" height="12" viewBox="0 0 30 12"><path fill="none" stroke="#000" stroke-width="1.15" d="M3.8 0.5 H1.5 V10.5 H3.8 M7 0.5 H9.6 M8.5 0.5 V6.8 Q8.5 8.5 10.3 8.5 H10.9 Q12.6 8.5 12.6 6.8 V0.5 M11.4 0.5 H13.8 M21.5 2.2 V1.6 Q21.5 0.5 20.4 0.5 H16.6 Q15.5 0.5 15.5 1.8 V3.2 Q15.5 4.5 16.7 4.5 H20.3 Q21.6 4.5 21.6 5.8 V7.2 Q21.6 8.5 20.3 8.5 H16.5 Q15.4 8.5 15.4 7.4 V7 M25.2 0.5 H27.5 V10.5 H25.2"/></svg></div><div class="c c4" style="background:#a0faa0"><span class="dt"><em>A</em>llow<b>:</b> <i>6</i><b>.</b><i>6</i><b>.</b><i>6</i><b>.</b><i>6</i> belongs to <em>FW</em> <em>IPA</em>ddress <em>S</em>et<b>:</b> <em>P</em>ublic which is temporary enabled for <em>RDP</em></span></div><div class="sep"></div></div><div class="r" style="top:400px"><div class="c c1" style="background:#fff"><span class="dd"><i>16</i> <em>A</em>ug <i>2020</i> <i>11</i><b>:</b><i>45</i><b>:</b><i>06</i></span></div><div class="c c2" style="background:#fff"><span class="v4">4</span><span class="ip"><i>192</i><b>.</b><i>168</i><b>.</b><i>200</i><b>.</b><i>199</i></span></div><div class="c c3" style="background:#fff"><svg class="hs" width="16" height="18" viewBox="0 0 16 18"><path d="M1.5 6.6 L8 1.5 L14.5 6.6" stroke="#000" stroke-width="1.35" fill="none" stroke-linejoin="miter"/><g shape-rendering="crispEdges" fill="#000"><rect x="3" y="5" width="1" height="9"/><rect x="12" y="5" width="1" height="9"/><rect x="3" y="13" width="10" height="1"/><path fill-rule="evenodd" d="M5 7h6v4h-6z M7 8h2v2h-2z"/><rect x="7" y="14" width="2" height="1"/></g><rect x="3" y="15" width="10" height="1.4" fill="#000"/><ellipse cx="8" cy="15.7" rx="2.2" ry="1" fill="#000"/></svg><span class="lt"><em>P</em>rivate/<em>L</em>ocal</span></div><div class="c c4" style="background:#ffa0a0"><span class="dt"><em>D</em>isconnected<b>:</b> <i>192</i><b>.</b><i>168</i><b>.</b><i>200</i><b>.</b><i>199</i> on <em>FW</em> <em>T</em>emp <em>B</em>locklist<b>.</b><em>IP</em>v<i>4</i><b>:</b> <em>F</em>ailed <em>L</em>ogon on server <em>DESKTOP</em>-<em>GFGI</em><i>0</i><em>A</em><i>3</i></span></div><div class="gl"></div></div><div class="r" style="top:420px"><div class="c c1" style="background:#fff"><span class="dd"><i>16</i> <em>A</em>ug <i>2020</i> <i>11</i><b>:</b><i>45</i><b>:</b><i>05</i></span></div><div class="c c2" style="background:#fff"><span class="v4">4</span><span class="ip"><i>192</i><b>.</b><i>168</i><b>.</b><i>200</i><b>.</b><i>199</i></span></div><div class="c c3" style="background:#fff"><svg class="hs" width="16" height="18" viewBox="0 0 16 18"><path d="M1.5 6.6 L8 1.5 L14.5 6.6" stroke="#000" stroke-width="1.35" fill="none" stroke-linejoin="miter"/><g shape-rendering="crispEdges" fill="#000"><rect x="3" y="5" width="1" height="9"/><rect x="12" y="5" width="1" height="9"/><rect x="3" y="13" width="10" height="1"/><path fill-rule="evenodd" d="M5 7h6v4h-6z M7 8h2v2h-2z"/><rect x="7" y="14" width="2" height="1"/></g><rect x="3" y="15" width="10" height="1.4" fill="#000"/><ellipse cx="8" cy="15.7" rx="2.2" ry="1" fill="#000"/></svg><span class="lt"><em>P</em>rivate/<em>L</em>ocal</span></div><div class="c c4" style="background:#a0faa0"><span class="dt"><em>A</em>llow<b>:</b> <i>192</i><b>.</b><i>168</i><b>.</b><i>200</i><b>.</b><i>199</i> belongs to <em>FW</em> <em>IPA</em>ddress <em>S</em>et<b>:</b> <em>P</em>rivate + <em>L</em>ocal which is enabled for <em>RDP</em></span></div><div class="sep"></div></div><div class="r" style="top:440px"><div class="c c1" style="background:#fff"><span class="dd"><i>16</i> <em>A</em>ug <i>2020</i> <i>11</i><b>:</b><i>43</i><b>:</b><i>24</i></span></div><div class="c c2" style="background:#fff"><span class="v4">4</span><span class="ip"><i>6</i><b>.</b><i>6</i><b>.</b><i>6</i><b>.</b><i>6</i></span></div><div class="c c3" style="background:#fff"><svg class="fl" width="16" height="11" viewBox="0 0 16 11"><rect x="0" y="0" width="16" height="1" fill="#e83838"/><rect x="0" y="1" width="16" height="1" fill="#f4f4f4"/><rect x="0" y="2" width="16" height="1" fill="#e83838"/><rect x="0" y="3" width="16" height="1" fill="#f4f4f4"/><rect x="0" y="4" width="16" height="1" fill="#e83838"/><rect x="0" y="5" width="16" height="1" fill="#f4f4f4"/><rect x="0" y="6" width="16" height="1" fill="#e83838"/><rect x="0" y="7" width="16" height="1" fill="#f4f4f4"/><rect x="0" y="8" width="16" height="1" fill="#e83838"/><rect x="0" y="9" width="16" height="1" fill="#f4f4f4"/><rect x="0" y="10" width="16" height="1" fill="#e83838"/><rect x="0" y="0" width="9" height="7" fill="#3a5ad8"/><rect x="1" y="1" width="1" height="1" fill="#e8ecff"/><rect x="3" y="1" width="1" height="1" fill="#e8ecff"/><rect x="5" y="1" width="1" height="1" fill="#e8ecff"/><rect x="7" y="1" width="1" height="1" fill="#e8ecff"/><rect x="2" y="3" width="1" height="1" fill="#e8ecff"/><rect x="4" y="3" width="1" height="1" fill="#e8ecff"/><rect x="6" y="3" width="1" height="1" fill="#e8ecff"/><rect x="1" y="5" width="1" height="1" fill="#e8ecff"/><rect x="3" y="5" width="1" height="1" fill="#e8ecff"/><rect x="5" y="5" width="1" height="1" fill="#e8ecff"/><rect x="7" y="5" width="1" height="1" fill="#e8ecff"/></svg><span class="lt"><em>U</em>nited <em>S</em>tates</span><svg class="ccs" width="30" height="12" viewBox="0 0 30 12"><path fill="none" stroke="#000" stroke-width="1.15" d="M3.8 0.5 H1.5 V10.5 H3.8 M7 0.5 H9.6 M8.5 0.5 V6.8 Q8.5 8.5 10.3 8.5 H10.9 Q12.6 8.5 12.6 6.8 V0.5 M11.4 0.5 H13.8 M21.5 2.2 V1.6 Q21.5 0.5 20.4 0.5 H16.6 Q15.5 0.5 15.5 1.8 V3.2 Q15.5 4.5 16.7 4.5 H20.3 Q21.6 4.5 21.6 5.8 V7.2 Q21.6 8.5 20.3 8.5 H16.5 Q15.4 8.5 15.4 7.4 V7 M25.2 0.5 H27.5 V10.5 H25.2"/></svg></div><div class="c c4" style="background:#ffa0a0"><span class="dt"><em>D</em>isconnected<b>:</b> <i>6</i><b>.</b><i>6</i><b>.</b><i>6</i><b>.</b><i>6</i> on <em>FW</em> <em>T</em>emp <em>B</em>locklist<b>.</b><em>IP</em>v<i>4</i><b>:</b> <em>F</em>ailed <em>L</em>ogon on server <em>DESKTOP</em>-<em>GFGI</em><i>0</i><em>A</em><i>3</i></span></div><div class="gl"></div></div><div class="r" style="top:460px"><div class="c c1" style="background:#fff"><span class="dd"><i>16</i> <em>A</em>ug <i>2020</i> <i>11</i><b>:</b><i>43</i><b>:</b><i>03</i></span></div><div class="c c2" style="background:#fff"><span class="v4">4</span><span class="ip"><i>6</i><b>.</b><i>6</i><b>.</b><i>6</i><b>.</b><i>6</i></span></div><div class="c c3" style="background:#fff"><svg class="fl" width="16" height="11" viewBox="0 0 16 11"><rect x="0" y="0" width="16" height="1" fill="#e83838"/><rect x="0" y="1" width="16" height="1" fill="#f4f4f4"/><rect x="0" y="2" width="16" height="1" fill="#e83838"/><rect x="0" y="3" width="16" height="1" fill="#f4f4f4"/><rect x="0" y="4" width="16" height="1" fill="#e83838"/><rect x="0" y="5" width="16" height="1" fill="#f4f4f4"/><rect x="0" y="6" width="16" height="1" fill="#e83838"/><rect x="0" y="7" width="16" height="1" fill="#f4f4f4"/><rect x="0" y="8" width="16" height="1" fill="#e83838"/><rect x="0" y="9" width="16" height="1" fill="#f4f4f4"/><rect x="0" y="10" width="16" height="1" fill="#e83838"/><rect x="0" y="0" width="9" height="7" fill="#3a5ad8"/><rect x="1" y="1" width="1" height="1" fill="#e8ecff"/><rect x="3" y="1" width="1" height="1" fill="#e8ecff"/><rect x="5" y="1" width="1" height="1" fill="#e8ecff"/><rect x="7" y="1" width="1" height="1" fill="#e8ecff"/><rect x="2" y="3" width="1" height="1" fill="#e8ecff"/><rect x="4" y="3" width="1" height="1" fill="#e8ecff"/><rect x="6" y="3" width="1" height="1" fill="#e8ecff"/><rect x="1" y="5" width="1" height="1" fill="#e8ecff"/><rect x="3" y="5" width="1" height="1" fill="#e8ecff"/><rect x="5" y="5" width="1" height="1" fill="#e8ecff"/><rect x="7" y="5" width="1" height="1" fill="#e8ecff"/></svg><span class="lt"><em>U</em>nited <em>S</em>tates</span><svg class="ccs" width="30" height="12" viewBox="0 0 30 12"><path fill="none" stroke="#000" stroke-width="1.15" d="M3.8 0.5 H1.5 V10.5 H3.8 M7 0.5 H9.6 M8.5 0.5 V6.8 Q8.5 8.5 10.3 8.5 H10.9 Q12.6 8.5 12.6 6.8 V0.5 M11.4 0.5 H13.8 M21.5 2.2 V1.6 Q21.5 0.5 20.4 0.5 H16.6 Q15.5 0.5 15.5 1.8 V3.2 Q15.5 4.5 16.7 4.5 H20.3 Q21.6 4.5 21.6 5.8 V7.2 Q21.6 8.5 20.3 8.5 H16.5 Q15.4 8.5 15.4 7.4 V7 M25.2 0.5 H27.5 V10.5 H25.2"/></svg></div><div class="c c4" style="background:#a0faa0"><span class="dt"><em>A</em>llow<b>:</b> <i>6</i><b>.</b><i>6</i><b>.</b><i>6</i><b>.</b><i>6</i> belongs to <em>FW</em> <em>IPA</em>ddress <em>S</em>et<b>:</b> <em>P</em>ublic which is temporary enabled for <em>RDP</em></span></div><div class="gl"></div></div><div class="r" style="top:480px"><div class="c c1" style="background:#fff"><span class="dd"><i>16</i> <em>A</em>ug <i>2020</i> <i>11</i><b>:</b><i>36</i><b>:</b><i>35</i></span></div><div class="c c2" style="background:#fff"><span class="v4">4</span><span class="ip"><i>6</i><b>.</b><i>6</i><b>.</b><i>6</i><b>.</b><i>6</i></span></div><div class="c c3" style="background:#fff"><svg class="fl" width="16" height="11" viewBox="0 0 16 11"><rect x="0" y="0" width="16" height="1" fill="#e83838"/><rect x="0" y="1" width="16" height="1" fill="#f4f4f4"/><rect x="0" y="2" width="16" height="1" fill="#e83838"/><rect x="0" y="3" width="16" height="1" fill="#f4f4f4"/><rect x="0" y="4" width="16" height="1" fill="#e83838"/><rect x="0" y="5" width="16" height="1" fill="#f4f4f4"/><rect x="0" y="6" width="16" height="1" fill="#e83838"/><rect x="0" y="7" width="16" height="1" fill="#f4f4f4"/><rect x="0" y="8" width="16" height="1" fill="#e83838"/><rect x="0" y="9" width="16" height="1" fill="#f4f4f4"/><rect x="0" y="10" width="16" height="1" fill="#e83838"/><rect x="0" y="0" width="9" height="7" fill="#3a5ad8"/><rect x="1" y="1" width="1" height="1" fill="#e8ecff"/><rect x="3" y="1" width="1" height="1" fill="#e8ecff"/><rect x="5" y="1" width="1" height="1" fill="#e8ecff"/><rect x="7" y="1" width="1" height="1" fill="#e8ecff"/><rect x="2" y="3" width="1" height="1" fill="#e8ecff"/><rect x="4" y="3" width="1" height="1" fill="#e8ecff"/><rect x="6" y="3" width="1" height="1" fill="#e8ecff"/><rect x="1" y="5" width="1" height="1" fill="#e8ecff"/><rect x="3" y="5" width="1" height="1" fill="#e8ecff"/><rect x="5" y="5" width="1" height="1" fill="#e8ecff"/><rect x="7" y="5" width="1" height="1" fill="#e8ecff"/></svg><span class="lt"><em>U</em>nited <em>S</em>tates</span><svg class="ccs" width="30" height="12" viewBox="0 0 30 12"><path fill="none" stroke="#000" stroke-width="1.15" d="M3.8 0.5 H1.5 V10.5 H3.8 M7 0.5 H9.6 M8.5 0.5 V6.8 Q8.5 8.5 10.3 8.5 H10.9 Q12.6 8.5 12.6 6.8 V0.5 M11.4 0.5 H13.8 M21.5 2.2 V1.6 Q21.5 0.5 20.4 0.5 H16.6 Q15.5 0.5 15.5 1.8 V3.2 Q15.5 4.5 16.7 4.5 H20.3 Q21.6 4.5 21.6 5.8 V7.2 Q21.6 8.5 20.3 8.5 H16.5 Q15.4 8.5 15.4 7.4 V7 M25.2 0.5 H27.5 V10.5 H25.2"/></svg></div><div class="c c4" style="background:#a0faa0"><span class="dt"><em>A</em>llow<b>:</b> <i>6</i><b>.</b><i>6</i><b>.</b><i>6</i><b>.</b><i>6</i> belongs to <em>FW</em> <em>IPA</em>ddress <em>S</em>et<b>:</b> <em>P</em>ublic which is temporary enabled for <em>RDP</em></span></div><div class="sep"></div></div><div class="r" style="top:500px"><div class="c c1" style="background:#fff"><span class="dd"><i>16</i> <em>A</em>ug <i>2020</i> <i>11</i><b>:</b><i>36</i><b>:</b><i>19</i></span></div><div class="c c2" style="background:#fff"><span class="v4">4</span><span class="ip"><i>192</i><b>.</b><i>168</i><b>.</b><i>200</i><b>.</b><i>199</i></span></div><div class="c c3" style="background:#fff"><svg class="hs" width="16" height="18" viewBox="0 0 16 18"><path d="M1.5 6.6 L8 1.5 L14.5 6.6" stroke="#000" stroke-width="1.35" fill="none" stroke-linejoin="miter"/><g shape-rendering="crispEdges" fill="#000"><rect x="3" y="5" width="1" height="9"/><rect x="12" y="5" width="1" height="9"/><rect x="3" y="13" width="10" height="1"/><path fill-rule="evenodd" d="M5 7h6v4h-6z M7 8h2v2h-2z"/><rect x="7" y="14" width="2" height="1"/></g><rect x="3" y="15" width="10" height="1.4" fill="#000"/><ellipse cx="8" cy="15.7" rx="2.2" ry="1" fill="#000"/></svg><span class="lt"><em>P</em>rivate/<em>L</em>ocal</span></div><div class="c c4" style="background:#ffa0a0"><span class="dt"><em>D</em>isconnected<b>:</b> <i>192</i><b>.</b><i>168</i><b>.</b><i>200</i><b>.</b><i>199</i> on <em>FW</em> <em>T</em>emp <em>B</em>locklist<b>.</b><em>IP</em>v<i>4</i><b>:</b> <em>F</em>ailed <em>L</em>ogon on server <em>DESKTOP</em>-<em>GFGI</em><i>0</i><em>A</em><i>3</i></span></div><div class="gl"></div></div><div class="r" style="top:520px"><div class="c c1" style="background:#fff"><span class="dd"><i>16</i> <em>A</em>ug <i>2020</i> <i>11</i><b>:</b><i>35</i><b>:</b><i>59</i></span></div><div class="c c2" style="background:#fff"><span class="v4">4</span><span class="ip"><i>192</i><b>.</b><i>168</i><b>.</b><i>200</i><b>.</b><i>199</i></span></div><div class="c c3" style="background:#fff"><svg class="hs" width="16" height="18" viewBox="0 0 16 18"><path d="M1.5 6.6 L8 1.5 L14.5 6.6" stroke="#000" stroke-width="1.35" fill="none" stroke-linejoin="miter"/><g shape-rendering="crispEdges" fill="#000"><rect x="3" y="5" width="1" height="9"/><rect x="12" y="5" width="1" height="9"/><rect x="3" y="13" width="10" height="1"/><path fill-rule="evenodd" d="M5 7h6v4h-6z M7 8h2v2h-2z"/><rect x="7" y="14" width="2" height="1"/></g><rect x="3" y="15" width="10" height="1.4" fill="#000"/><ellipse cx="8" cy="15.7" rx="2.2" ry="1" fill="#000"/></svg><span class="lt"><em>P</em>rivate/<em>L</em>ocal</span></div><div class="c c4" style="background:#a0faa0"><span class="dt"><em>A</em>llow<b>:</b> <i>192</i><b>.</b><i>168</i><b>.</b><i>200</i><b>.</b><i>199</i> belongs to <em>FW</em> <em>IPA</em>ddress <em>S</em>et<b>:</b> <em>P</em>rivate + <em>L</em>ocal which is enabled for <em>RDP</em></span></div><div class="gl"></div></div><div class="r" style="top:540px"><div class="c c1" style="background:#fff"><span class="dd"><i>16</i> <em>A</em>ug <i>2020</i> <i>11</i><b>:</b><i>31</i><b>:</b><i>06</i></span></div><div class="c c2" style="background:#fff"><span class="v4">4</span><span class="ip"><i>192</i><b>.</b><i>168</i><b>.</b><i>200</i><b>.</b><i>199</i></span></div><div class="c c3" style="background:#fff"><svg class="hs" width="16" height="18" viewBox="0 0 16 18"><path d="M1.5 6.6 L8 1.5 L14.5 6.6" stroke="#000" stroke-width="1.35" fill="none" stroke-linejoin="miter"/><g shape-rendering="crispEdges" fill="#000"><rect x="3" y="5" width="1" height="9"/><rect x="12" y="5" width="1" height="9"/><rect x="3" y="13" width="10" height="1"/><path fill-rule="evenodd" d="M5 7h6v4h-6z M7 8h2v2h-2z"/><rect x="7" y="14" width="2" height="1"/></g><rect x="3" y="15" width="10" height="1.4" fill="#000"/><ellipse cx="8" cy="15.7" rx="2.2" ry="1" fill="#000"/></svg><span class="lt"><em>P</em>rivate/<em>L</em>ocal</span></div><div class="c c4" style="background:#ffa0a0"><span class="dt"><em>D</em>isconnected<b>:</b> <i>192</i><b>.</b><i>168</i><b>.</b><i>200</i><b>.</b><i>199</i> on <em>FW</em> <em>T</em>emp <em>B</em>locklist<b>.</b><em>IP</em>v<i>4</i><b>:</b> <em>F</em>ailed <em>L</em>ogon on server <em>DESKTOP</em>-<em>GFGI</em><i>0</i><em>A</em><i>3</i></span></div><div class="gl"></div></div><div class="r" style="top:560px"><div class="c c1" style="background:#fff"><span class="dd"><i>16</i> <em>A</em>ug <i>2020</i> <i>11</i><b>:</b><i>30</i><b>:</b><i>45</i></span></div><div class="c c2" style="background:#fff"><span class="v4">4</span><span class="ip"><i>192</i><b>.</b><i>168</i><b>.</b><i>200</i><b>.</b><i>199</i></span></div><div class="c c3" style="background:#fff"><svg class="hs" width="16" height="18" viewBox="0 0 16 18"><path d="M1.5 6.6 L8 1.5 L14.5 6.6" stroke="#000" stroke-width="1.35" fill="none" stroke-linejoin="miter"/><g shape-rendering="crispEdges" fill="#000"><rect x="3" y="5" width="1" height="9"/><rect x="12" y="5" width="1" height="9"/><rect x="3" y="13" width="10" height="1"/><path fill-rule="evenodd" d="M5 7h6v4h-6z M7 8h2v2h-2z"/><rect x="7" y="14" width="2" height="1"/></g><rect x="3" y="15" width="10" height="1.4" fill="#000"/><ellipse cx="8" cy="15.7" rx="2.2" ry="1" fill="#000"/></svg><span class="lt"><em>P</em>rivate/<em>L</em>ocal</span></div><div class="c c4" style="background:#a0faa0"><span class="dt"><em>A</em>llow<b>:</b> <i>192</i><b>.</b><i>168</i><b>.</b><i>200</i><b>.</b><i>199</i> belongs to <em>FW</em> <em>IPA</em>ddress <em>S</em>et<b>:</b> <em>P</em>rivate + <em>L</em>ocal which is enabled for <em>RDP</em></span></div><div class="sep"></div></div><div class="r" style="top:580px"><div class="c c1" style="background:#fff"><span class="dd"><i>16</i> <em>A</em>ug <i>2020</i> <i>11</i><b>:</b><i>30</i><b>:</b><i>13</i></span></div><div class="c c2" style="background:#fff"><span class="v4">4</span><span class="ip"><i>6</i><b>.</b><i>6</i><b>.</b><i>6</i><b>.</b><i>6</i></span></div><div class="c c3" style="background:#fff"><svg class="fl" width="16" height="11" viewBox="0 0 16 11"><rect x="0" y="0" width="16" height="1" fill="#e83838"/><rect x="0" y="1" width="16" height="1" fill="#f4f4f4"/><rect x="0" y="2" width="16" height="1" fill="#e83838"/><rect x="0" y="3" width="16" height="1" fill="#f4f4f4"/><rect x="0" y="4" width="16" height="1" fill="#e83838"/><rect x="0" y="5" width="16" height="1" fill="#f4f4f4"/><rect x="0" y="6" width="16" height="1" fill="#e83838"/><rect x="0" y="7" width="16" height="1" fill="#f4f4f4"/><rect x="0" y="8" width="16" height="1" fill="#e83838"/><rect x="0" y="9" width="16" height="1" fill="#f4f4f4"/><rect x="0" y="10" width="16" height="1" fill="#e83838"/><rect x="0" y="0" width="9" height="7" fill="#3a5ad8"/><rect x="1" y="1" width="1" height="1" fill="#e8ecff"/><rect x="3" y="1" width="1" height="1" fill="#e8ecff"/><rect x="5" y="1" width="1" height="1" fill="#e8ecff"/><rect x="7" y="1" width="1" height="1" fill="#e8ecff"/><rect x="2" y="3" width="1" height="1" fill="#e8ecff"/><rect x="4" y="3" width="1" height="1" fill="#e8ecff"/><rect x="6" y="3" width="1" height="1" fill="#e8ecff"/><rect x="1" y="5" width="1" height="1" fill="#e8ecff"/><rect x="3" y="5" width="1" height="1" fill="#e8ecff"/><rect x="5" y="5" width="1" height="1" fill="#e8ecff"/><rect x="7" y="5" width="1" height="1" fill="#e8ecff"/></svg><span class="lt"><em>U</em>nited <em>S</em>tates</span><svg class="ccs" width="30" height="12" viewBox="0 0 30 12"><path fill="none" stroke="#000" stroke-width="1.15" d="M3.8 0.5 H1.5 V10.5 H3.8 M7 0.5 H9.6 M8.5 0.5 V6.8 Q8.5 8.5 10.3 8.5 H10.9 Q12.6 8.5 12.6 6.8 V0.5 M11.4 0.5 H13.8 M21.5 2.2 V1.6 Q21.5 0.5 20.4 0.5 H16.6 Q15.5 0.5 15.5 1.8 V3.2 Q15.5 4.5 16.7 4.5 H20.3 Q21.6 4.5 21.6 5.8 V7.2 Q21.6 8.5 20.3 8.5 H16.5 Q15.4 8.5 15.4 7.4 V7 M25.2 0.5 H27.5 V10.5 H25.2"/></svg></div><div class="c c4" style="background:#a0faa0"><span class="dt"><em>A</em>llow<b>:</b> <i>6</i><b>.</b><i>6</i><b>.</b><i>6</i><b>.</b><i>6</i> belongs to <em>FW</em> <em>IPA</em>ddress <em>S</em>et<b>:</b> <em>P</em>ublic which is temporary enabled for <em>RDP</em></span></div><div class="gl"></div></div><div class="r" style="top:600px"><div class="c c1" style="background:#fff"><span class="dd"><i>16</i> <em>A</em>ug <i>2020</i> <i>11</i><b>:</b><i>29</i><b>:</b><i>49</i></span></div><div class="c c2" style="background:#fff"><span class="v4">4</span><span class="ip"><i>6</i><b>.</b><i>6</i><b>.</b><i>6</i><b>.</b><i>6</i></span></div><div class="c c3" style="background:#fff"><svg class="fl" width="16" height="11" viewBox="0 0 16 11"><rect x="0" y="0" width="16" height="1" fill="#e83838"/><rect x="0" y="1" width="16" height="1" fill="#f4f4f4"/><rect x="0" y="2" width="16" height="1" fill="#e83838"/><rect x="0" y="3" width="16" height="1" fill="#f4f4f4"/><rect x="0" y="4" width="16" height="1" fill="#e83838"/><rect x="0" y="5" width="16" height="1" fill="#f4f4f4"/><rect x="0" y="6" width="16" height="1" fill="#e83838"/><rect x="0" y="7" width="16" height="1" fill="#f4f4f4"/><rect x="0" y="8" width="16" height="1" fill="#e83838"/><rect x="0" y="9" width="16" height="1" fill="#f4f4f4"/><rect x="0" y="10" width="16" height="1" fill="#e83838"/><rect x="0" y="0" width="9" height="7" fill="#3a5ad8"/><rect x="1" y="1" width="1" height="1" fill="#e8ecff"/><rect x="3" y="1" width="1" height="1" fill="#e8ecff"/><rect x="5" y="1" width="1" height="1" fill="#e8ecff"/><rect x="7" y="1" width="1" height="1" fill="#e8ecff"/><rect x="2" y="3" width="1" height="1" fill="#e8ecff"/><rect x="4" y="3" width="1" height="1" fill="#e8ecff"/><rect x="6" y="3" width="1" height="1" fill="#e8ecff"/><rect x="1" y="5" width="1" height="1" fill="#e8ecff"/><rect x="3" y="5" width="1" height="1" fill="#e8ecff"/><rect x="5" y="5" width="1" height="1" fill="#e8ecff"/><rect x="7" y="5" width="1" height="1" fill="#e8ecff"/></svg><span class="lt"><em>U</em>nited <em>S</em>tates</span><svg class="ccs" width="30" height="12" viewBox="0 0 30 12"><path fill="none" stroke="#000" stroke-width="1.15" d="M3.8 0.5 H1.5 V10.5 H3.8 M7 0.5 H9.6 M8.5 0.5 V6.8 Q8.5 8.5 10.3 8.5 H10.9 Q12.6 8.5 12.6 6.8 V0.5 M11.4 0.5 H13.8 M21.5 2.2 V1.6 Q21.5 0.5 20.4 0.5 H16.6 Q15.5 0.5 15.5 1.8 V3.2 Q15.5 4.5 16.7 4.5 H20.3 Q21.6 4.5 21.6 5.8 V7.2 Q21.6 8.5 20.3 8.5 H16.5 Q15.4 8.5 15.4 7.4 V7 M25.2 0.5 H27.5 V10.5 H25.2"/></svg></div><div class="c c4" style="background:#a0faa0"><span class="dt"><em>A</em>llow<b>:</b> <i>6</i><b>.</b><i>6</i><b>.</b><i>6</i><b>.</b><i>6</i> belongs to <em>FW</em> <em>IPA</em>ddress <em>S</em>et<b>:</b> <em>P</em>ublic which is temporary enabled for <em>RDP</em></span></div><div class="sep"></div></div><div class="r" style="top:620px"><div class="c c1" style="background:#fff"><span class="dd"><i>16</i> <em>A</em>ug <i>2020</i> <i>11</i><b>:</b><i>20</i><b>:</b><i>21</i></span></div><div class="c c2" style="background:#fff"><span class="v4">4</span><span class="ip"><i>127</i><b>.</b><i>0</i><b>.</b><i>0</i><b>.</b><i>1</i></span></div><div class="c c3" style="background:#fff"><svg class="hs" width="16" height="18" viewBox="0 0 16 18"><path d="M1.5 6.6 L8 1.5 L14.5 6.6" stroke="#000" stroke-width="1.35" fill="none" stroke-linejoin="miter"/><g shape-rendering="crispEdges" fill="#000"><rect x="3" y="5" width="1" height="9"/><rect x="12" y="5" width="1" height="9"/><rect x="3" y="13" width="10" height="1"/><path fill-rule="evenodd" d="M5 7h6v4h-6z M7 8h2v2h-2z"/><rect x="7" y="14" width="2" height="1"/></g><rect x="3" y="15" width="10" height="1.4" fill="#000"/><ellipse cx="8" cy="15.7" rx="2.2" ry="1" fill="#000"/></svg><span class="lt"><em>P</em>rivate/<em>L</em>ocal</span></div><div class="c c4" style="background:#ffffff"><span class="dt"><em>G</em>eo<em>IP</em> loaded <em>OK</em></span></div><div class="sep"></div></div><div class="r" style="top:640px"><div class="c c1" style="background:#fff"><span class="dd"><i>16</i> <em>A</em>ug <i>2020</i> <i>10</i><b>:</b><i>35</i><b>:</b><i>01</i></span></div><div class="c c2" style="background:#fff"><span class="v4">4</span><span class="ip"><i>6</i><b>.</b><i>6</i><b>.</b><i>6</i><b>.</b><i>6</i></span></div><div class="c c3" style="background:#fff"><svg class="fl" width="16" height="11" viewBox="0 0 16 11"><rect x="0" y="0" width="16" height="1" fill="#e83838"/><rect x="0" y="1" width="16" height="1" fill="#f4f4f4"/><rect x="0" y="2" width="16" height="1" fill="#e83838"/><rect x="0" y="3" width="16" height="1" fill="#f4f4f4"/><rect x="0" y="4" width="16" height="1" fill="#e83838"/><rect x="0" y="5" width="16" height="1" fill="#f4f4f4"/><rect x="0" y="6" width="16" height="1" fill="#e83838"/><rect x="0" y="7" width="16" height="1" fill="#f4f4f4"/><rect x="0" y="8" width="16" height="1" fill="#e83838"/><rect x="0" y="9" width="16" height="1" fill="#f4f4f4"/><rect x="0" y="10" width="16" height="1" fill="#e83838"/><rect x="0" y="0" width="9" height="7" fill="#3a5ad8"/><rect x="1" y="1" width="1" height="1" fill="#e8ecff"/><rect x="3" y="1" width="1" height="1" fill="#e8ecff"/><rect x="5" y="1" width="1" height="1" fill="#e8ecff"/><rect x="7" y="1" width="1" height="1" fill="#e8ecff"/><rect x="2" y="3" width="1" height="1" fill="#e8ecff"/><rect x="4" y="3" width="1" height="1" fill="#e8ecff"/><rect x="6" y="3" width="1" height="1" fill="#e8ecff"/><rect x="1" y="5" width="1" height="1" fill="#e8ecff"/><rect x="3" y="5" width="1" height="1" fill="#e8ecff"/><rect x="5" y="5" width="1" height="1" fill="#e8ecff"/><rect x="7" y="5" width="1" height="1" fill="#e8ecff"/></svg><span class="lt"><em>U</em>nited <em>S</em>tates</span><svg class="ccs" width="30" height="12" viewBox="0 0 30 12"><path fill="none" stroke="#000" stroke-width="1.15" d="M3.8 0.5 H1.5 V10.5 H3.8 M7 0.5 H9.6 M8.5 0.5 V6.8 Q8.5 8.5 10.3 8.5 H10.9 Q12.6 8.5 12.6 6.8 V0.5 M11.4 0.5 H13.8 M21.5 2.2 V1.6 Q21.5 0.5 20.4 0.5 H16.6 Q15.5 0.5 15.5 1.8 V3.2 Q15.5 4.5 16.7 4.5 H20.3 Q21.6 4.5 21.6 5.8 V7.2 Q21.6 8.5 20.3 8.5 H16.5 Q15.4 8.5 15.4 7.4 V7 M25.2 0.5 H27.5 V10.5 H25.2"/></svg></div><div class="c c4" style="background:#a0faa0"><span class="dt"><em>A</em>llow<b>:</b> <i>6</i><b>.</b><i>6</i><b>.</b><i>6</i><b>.</b><i>6</i> belongs to <em>FW</em> <em>IPA</em>ddress <em>S</em>et<b>:</b> <em>P</em>ublic which is temporary enabled for <em>RDP</em></span></div><div class="gl"></div></div><div class="vl" style="left:131px"></div><div class="vl" style="left:251px"></div><div class="vl" style="left:402px"></div><div class="vl" style="left:880px"></div></div>
<svg style="position:absolute;left:75px;top:327px" width="14" height="22" viewBox="0 0 14 22"><path d="M1.5 1.5 V17.5 L5.5 13.8 L8.3 19.8 L10.6 18.8 L7.9 13 H13 Z" fill="#fff" stroke="#000" stroke-width="1" stroke-linejoin="miter"/></svg></body></html>
